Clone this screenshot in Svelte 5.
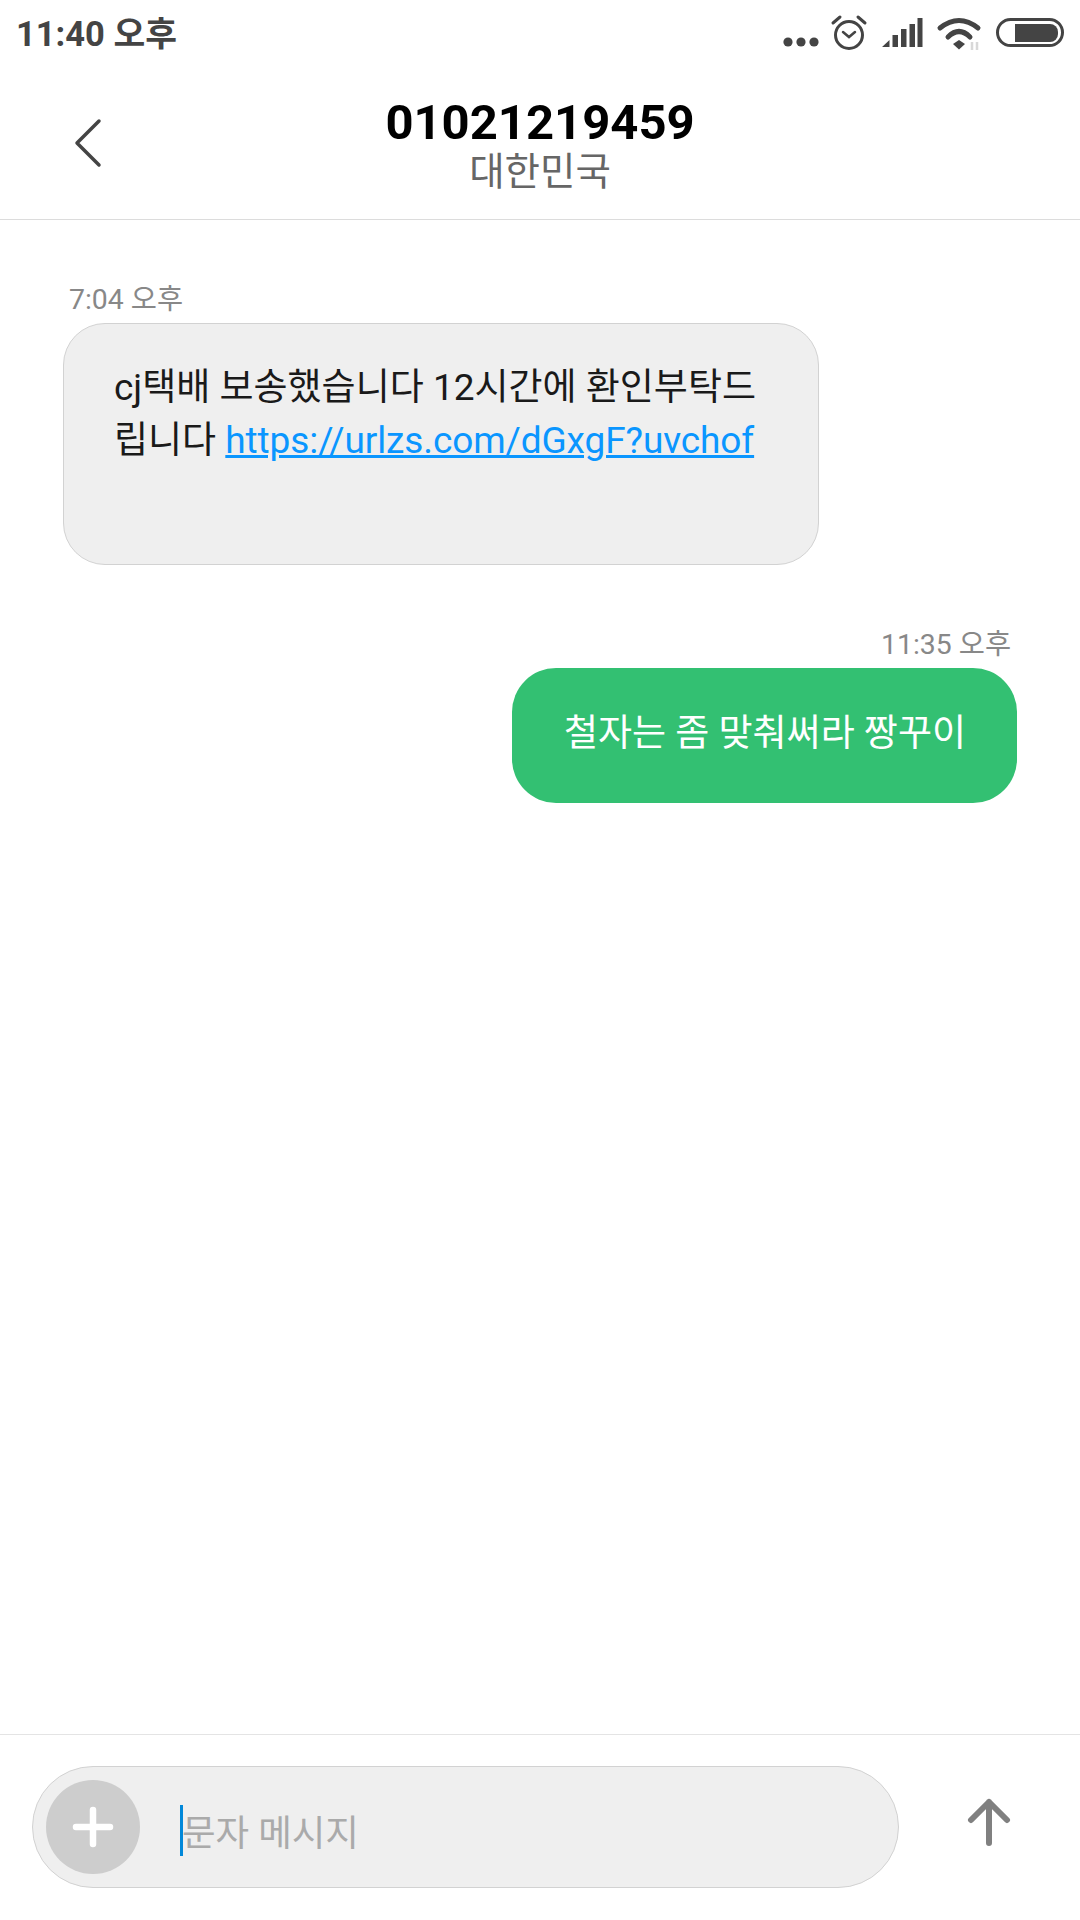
<script>
  const messages = [
    { id: 1, time: "7:04 오후", mine: false },
    { id: 2, time: "11:35 오후", mine: true }
  ];
</script>

<style>
  :global(body) {
    margin: 0;
    background: #fff;
  }

  .Screen {
    width: 1080px;
    height: 1920px;
    display: flex;
    flex-direction: column;
    font-family: Roboto, "Noto Sans CJK KR", sans-serif;
  }

  .StatusBar {
    height: 66px;
    flex: none;
    display: flex;
    align-items: center;
    justify-content: space-between;
    padding: 0 14px 0 16px;
    color: #444;
  }

  .Clock {
    font-size: 34.5px;
    font-weight: 700;
    margin-bottom: 5px;
  }

  .Header {
    height: 153px;
    flex: none;
    position: relative;
    border-bottom: 1px solid #dcdcdc;
    text-align: center;
  }

  .Back {
    position: absolute;
    left: 73px;
    top: 52px;
  }

  .Number {
    margin-top: 30px;
    font-size: 49px;
    line-height: 54px;
    font-weight: 700;
    color: #000;
  }

  .Country {
    font-size: 38.5px;
    line-height: 44px;
    color: #666;
  }

  .Messages {
    flex: 1;
    padding-top: 63px;
    display: flex;
    flex-direction: column;
  }

  .Message {
    display: flex;
    flex-direction: column;
    margin-bottom: 63px;
  }

  .Message.Left {
    align-items: flex-start;
    padding-left: 63px;
  }

  .Message.Right {
    align-items: flex-end;
    padding-right: 63px;
  }

  .Time {
    font-size: 28.4px;
    line-height: 34px;
    color: #888;
    margin-bottom: 6px;
    padding: 0 6px;
  }

  .Bubble {
    box-sizing: border-box;
    font-size: 37px;
    line-height: 53px;
  }

  .Incoming {
    width: 756px;
    height: 242px;
    padding: 37px 50px;
    border-radius: 42px;
    background: #efefef;
    border: 1px solid #d2d2d2;
    color: #1a1a1a;
  }

  .Incoming a {
    color: #0a96ff;
    letter-spacing: -0.1px;
  }

  .Outgoing {
    width: 505px;
    height: 135px;
    padding: 39px 52px;
    border-radius: 44px;
    background: #33c072;
    color: #fff;
    white-space: nowrap;
  }

  .Footer {
    height: 186px;
    flex: none;
    box-sizing: border-box;
    border-top: 1px solid #e4e4e4;
    padding: 31px 0 0 32px;
    display: flex;
    align-items: flex-start;
  }

  .Input {
    box-sizing: border-box;
    width: 867px;
    height: 122px;
    border-radius: 61px;
    background: #efefef;
    border: 1px solid #d2d2d2;
    display: flex;
    align-items: center;
    padding-left: 13px;
  }

  .Plus {
    width: 94px;
    height: 94px;
    border-radius: 50%;
    background: #cdcdcd;
    flex: none;
    display: flex;
    align-items: center;
    justify-content: center;
  }

  .Caret {
    width: 3px;
    height: 51px;
    background: #0288d9;
    margin: 6px 0 0 40px;
    flex: none;
  }

  .Placeholder {
    font-size: 36.5px;
    color: #aaa;
    white-space: nowrap;
    margin: 6px 0 0 -1px;
  }

  .Send {
    margin: 32px 0 0 68px;
  }
</style>

<div class="Screen">
  <div class="StatusBar">
    <span class="Clock">11:40 오후</span>
    <svg width="290" height="66" viewBox="776 0 290 66" fill="none">
      <circle cx="788" cy="42" r="4.6" fill="#444" />
      <circle cx="801" cy="42" r="4.6" fill="#444" />
      <circle cx="814" cy="42" r="4.6" fill="#444" />
      <circle cx="849" cy="35" r="13.500" stroke="#444" stroke-width="3" />
      <path d="M843 32l6 5 6-5" stroke="#444" stroke-width="2.500" stroke-linecap="round" />
      <path d="M833 23l7-6M858 17l7 6" stroke="#444" stroke-width="3" stroke-linecap="round" />
      <path d="M882 47l7.500-7v7zM892.500 35h5.500v12h-5.500zM901 29h5.500v18H901zM909.500 24h5.500v23h-5.500zM917.500 18h5v29h-5z" fill="#444" />
      <path d="M940 28q19-15 38 0M948 37q11-11 22 0" stroke="#444" stroke-width="5" stroke-linecap="round" />
      <path d="M953 44l6-4 6 4-6 5.500z" fill="#444" />
      <path d="M972 42v8M977 42v8" stroke="#d8d8d8" stroke-width="2.500" />
      <rect x="997.500" y="19.500" width="65" height="26" rx="13" stroke="#444" stroke-width="3" />
      <path d="M1015 24h35a8 8 0 0 1 8 8v2a8 8 0 0 1-8 8h-35z" fill="#444" />
    </svg>
  </div>

  <div class="Header">
    <svg class="Back" width="30" height="52" viewBox="0 0 30 52" fill="none">
      <path d="M26 3L4 25l22 22" stroke="#444" stroke-width="3.500" stroke-linecap="round" stroke-linejoin="round" />
    </svg>
    <div class="Number">01021219459</div>
    <div class="Country">대한민국</div>
  </div>

  <div class="Messages">
    {#each messages as message (message.id)}
      <div class="Message" class:Left={!message.mine} class:Right={message.mine}>
        <div class="Time">{message.time}</div>
        {#if message.mine}
          <div class="Bubble Outgoing">철자는 좀 맞춰써라 짱꾸이</div>
        {:else}
          <div class="Bubble Incoming">cj택배 보송했습니다 12시간에 환인부탁드립니다 <a href="#top">https://urlzs.com/dGxgF?uvchof</a></div>
        {/if}
      </div>
    {/each}
  </div>

  <div class="Footer">
    <div class="Input">
      <div class="Plus">
        <svg width="42" height="42" viewBox="0 0 42 42">
          <path d="M21 4v34M4 21h34" stroke="#fff" stroke-width="6.500" stroke-linecap="round" />
        </svg>
      </div>
      <div class="Caret"></div>
      <span class="Placeholder">문자 메시지</span>
    </div>
    <svg class="Send" width="44" height="52" viewBox="0 0 44 52" fill="none">
      <path d="M22 45V4M4 22L22 4l18 18" stroke="#808080" stroke-width="6" stroke-linecap="round" stroke-linejoin="round" />
    </svg>
  </div>
</div>
